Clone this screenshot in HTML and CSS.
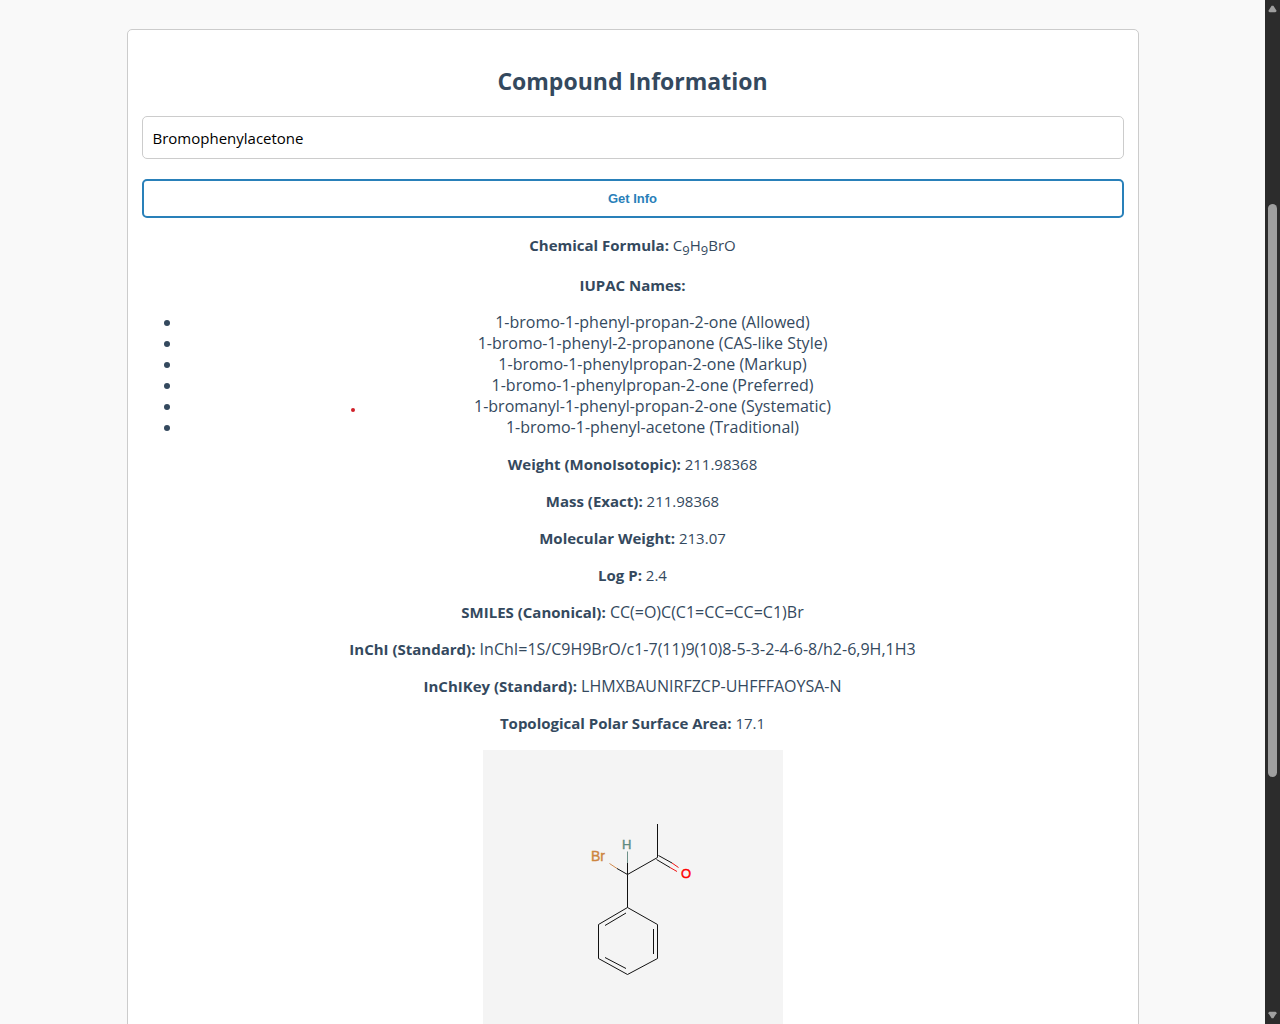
FILE: index.html
```
<!DOCTYPE html>
<html lang="en">
<head>
<meta charset="utf-8">
<title>Compound Information</title>
<link rel="stylesheet" href="styles.css">
</head>
<body>
<div class="viewport">
  <main class="page">
    <section class="card">
      <h2 class="title">Compound Information</h2>
      <input class="search" type="text" value="Bromophenylacetone" aria-label="Compound name">
      <button class="submit" type="button">Get Info</button>
      <p class="formula"><strong>Chemical Formula:</strong> C<sub>9</sub>H<sub>9</sub>BrO</p>
      <p><strong>IUPAC Names:</strong></p>
      <ul class="names">
        <li>1-bromo-1-phenyl-propan-2-one (Allowed)</li>
        <li>1-bromo-1-phenyl-2-propanone (CAS-like Style)</li>
        <li>1-bromo-1-phenylpropan-2-one (Markup)</li>
        <li>1-bromo-1-phenylpropan-2-one (Preferred)</li>
        <li>1-bromanyl-1-phenyl-propan-2-one (Systematic)</li>
        <li>1-bromo-1-phenyl-acetone (Traditional)</li>
      </ul>
      <p><strong>Weight (MonoIsotopic):</strong> 211.98368</p>
      <p><strong>Mass (Exact):</strong> 211.98368</p>
      <p><strong>Molecular Weight:</strong> 213.07</p>
      <p><strong>Log P:</strong> 2.4</p>
      <p class="identifier"><strong>SMILES (Canonical):</strong> CC(=O)C(C1=CC=CC=C1)Br</p>
      <p class="identifier"><strong>InChI (Standard):</strong> InChI=1S/C9H9BrO/c1-7(11)9(10)8-5-3-2-4-6-8/h2-6,9H,1H3</p>
      <p class="identifier"><strong>InChIKey (Standard):</strong> LHMXBAUNIRFZCP-UHFFFAOYSA-N</p>
      <p><strong>Topological Polar Surface Area:</strong> 17.1</p>
      <svg class="structure" viewBox="0 0 300 300" role="img" aria-label="Structure of bromophenylacetone">
        <g class="bond">
          <path d="M174.5 74V107.5L144.5 124.5V157.5L174.5 174.5V208.5L144.5 224.5L115.5 208.5V174.5L144.5 157.5"/>
          <path d="M170.5 179V204M143 163L122 175.5M122 207.5L143 218.5"/>
          <path d="M144.5 124.5L134 118.5M144.5 124.5V113"/>
          <path d="M175.5 105.5L189 113M173.5 109.5L187 117.5"/>
        </g>
        <path class="bond bond-br" d="M134 118.5L126.5 113.5"/>
        <path class="bond bond-h" d="M144.5 113V101.5"/>
        <path class="bond bond-o" d="M189 113L195.5 117.5M187 117.5L194 121.5"/>
        <text class="atom atom-br" x="108" y="111">Br</text>
        <text class="atom atom-h" x="139" y="99">H</text>
        <text class="atom atom-o" x="198" y="128">O</text>
      </svg>
    </section>
    <span class="pointer-dot"></span>
  </main>
  <div class="scrollbar" aria-hidden="true">
    <svg class="arrow" viewBox="0 0 10 8"><path d="M4 0.500H6L9.500 6Q9.500 7.500 8 7.500H2Q0.500 7.500 0.500 6Z"/></svg>
    <div class="track"><div class="thumb"></div></div>
    <svg class="arrow" viewBox="0 0 10 8"><path d="M4 7.500H6L9.500 2Q9.500 0.500 8 0.500H2Q0.500 0.500 0.500 2Z"/></svg>
  </div>
</div>
</body>
</html>
```
FILE: styles.css
```
* { box-sizing: border-box; }

body {
  margin: 0;
  background: #f9f9f9;
  color: #34495e;
  font: 15px/21px "Open Sans", "Noto Sans", sans-serif;
}

.viewport {
  display: grid;
  grid-template-columns: 1fr 15px;
  height: 100vh;
  overflow: hidden;
}

.page {
  position: relative;
  overflow: hidden;
  padding-top: 29px;
}

.card {
  width: 80%;
  margin: 0 auto;
  padding: 14px;
  border: 1px solid #ccc;
  border-radius: 5px;
  background: #fff;
  text-align: center;
}

.title {
  margin: 21px 0 19px;
  font-size: 23px;
  line-height: 32px;
  font-weight: 700;
}

.search {
  display: block;
  width: 100%;
  height: 43px;
  margin-bottom: 20px;
  padding: 10px;
  border: 1px solid #ccc;
  border-radius: 5px;
  background: #fff;
  color: #000;
  font: inherit;
}

.submit {
  display: block;
  width: 100%;
  height: 39px;
  border: 2px solid #2980b9;
  border-radius: 5px;
  background: #fff;
  color: #2980b9;
  font: bold 13px "Liberation Sans", Arial, sans-serif;
}

p, .names { margin: 16px 0; }

.formula {
  min-height: 25px;
  line-height: 22px;
}

.formula sub { font-size: 13px; line-height: 1; }

.names { padding-left: 40px; }

.names, .identifier { font-size: 16px; }

.identifier strong { font-size: 15px; }

.structure {
  display: block;
  width: 300px;
  height: 300px;
  margin: 0 auto;
  background: #f4f4f4;
}

.bond { fill: none; stroke: #111; stroke-width: 1; }
.bond-br { stroke: #d08a4e; }
.bond-h { stroke: #6d9088; }
.bond-o { stroke: #f01010; }

.atom { font: 14px "Liberation Sans", Arial, sans-serif; stroke-width: 0.400; }
.atom-br { fill: #cd853f; stroke: #cd853f; }
.atom-h { fill: #5f8a80; stroke: #5f8a80; font-size: 13px; }
.atom-o { fill: #f00; stroke: #f00; font-size: 13px; }

.pointer-dot {
  position: absolute;
  left: 351px;
  top: 408px;
  width: 4px;
  height: 4px;
  border-radius: 50%;
  background: #d0202a;
}

.scrollbar {
  display: flex;
  flex-direction: column;
  align-items: center;
  padding: 5px 0;
  background: #2c2c2c;
}

.arrow { width: 9px; height: 8px; fill: #9f9f9f; }

.track { flex: 1; padding-top: 191px; }

.thumb {
  width: 9px;
  height: 573px;
  border-radius: 5px;
  background: #9f9f9f;
}
```
